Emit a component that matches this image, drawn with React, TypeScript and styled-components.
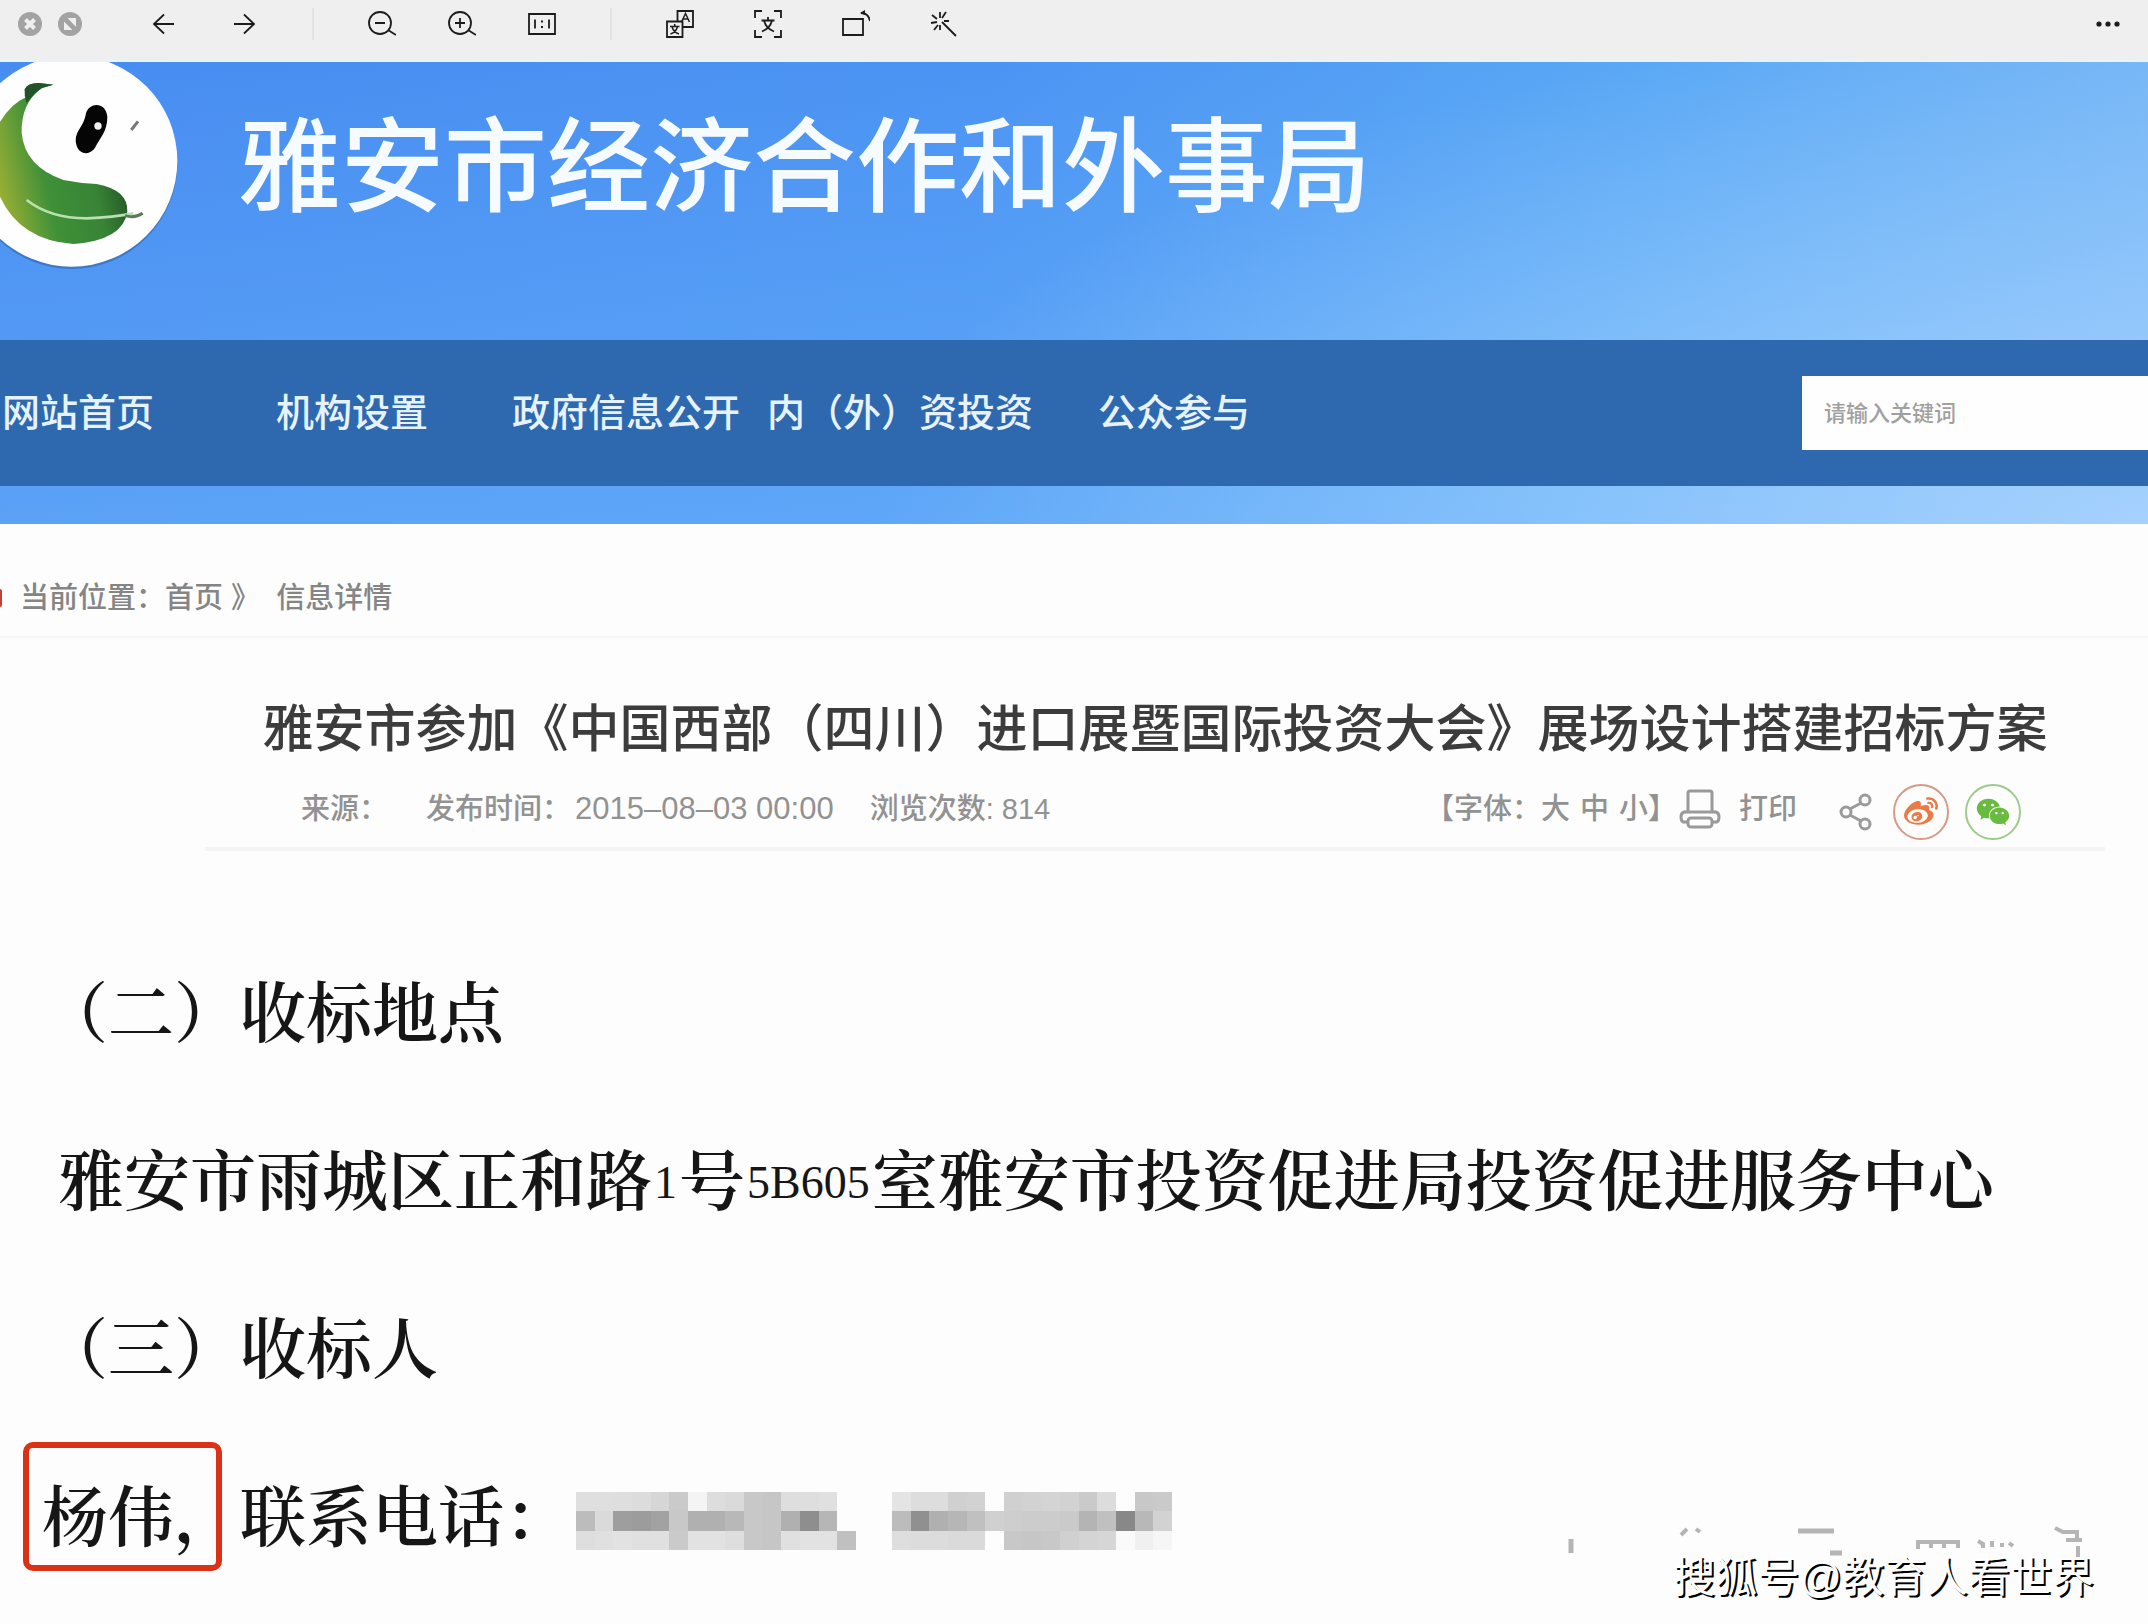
import React from "react";
import styled, { createGlobalStyle } from "styled-components";
import { FaWeibo, FaWeixin } from "react-icons/fa";

const sans = `"Liberation Sans", "Noto Sans CJK SC", sans-serif`;
const serif = `"Liberation Serif", "Noto Serif CJK SC", "Noto Sans CJK SC", serif`;

const GlobalStyle = createGlobalStyle`
  *, *::before, *::after { box-sizing: border-box; }
  body { margin: 0; background: #fdfdfd; font-family: ${sans}; overflow-x: hidden; }
  button { font: inherit; color: inherit; background: none; border: 0; padding: 0; cursor: pointer; }
  a { color: inherit; text-decoration: none; }
  h1, h2, p, ul { margin: 0; padding: 0; }
  svg { display: block; flex: none; }
`;

const Viewer = styled.div`
  display: flex;
  flex-direction: column;
  min-height: 100vh;
  overflow: hidden;
`;

/* ---------- viewer toolbar ---------- */

const Toolbar = styled.div`
  display: flex;
  align-items: center;
  height: 62px;
  padding: 0 0 12px 10px;
  background: #efefef;
  color: #1c1c1c;
  border-bottom: 2px solid #e9f3fa;
`;

const ToolGroup = styled.div<{ $before?: number }>`
  display: flex;
  margin-left: ${(p) => p.$before ?? 0}px;
`;

const ToolButton = styled.button<{ $width: number }>`
  display: flex;
  align-items: center;
  justify-content: center;
  width: ${(p) => p.$width}px;
  height: 48px;
`;

const Divider = styled.span`
  width: 2px;
  height: 32px;
  margin-left: 28px;
  background: #e2e2e2;
`;

const Spacer = styled.span`
  flex: 1;
`;

const Line = ({ children, size = 28 }: { children: React.ReactNode; size?: number }) => (
  <svg width={size} height={size} viewBox="0 0 28 28" fill="none" stroke="currentColor" strokeWidth="1.8">
    {children}
  </svg>
);

const CloseIcon = () => (
  <svg width="24" height="24" viewBox="0 0 24 24">
    <circle cx="12" cy="12" r="12" fill="#a3a3a3" />
    <path d="M7.5 7.5l9 9M16.5 7.5l-9 9" stroke="#efefef" strokeWidth="4" />
  </svg>
);

const ExpandIcon = () => (
  <svg width="24" height="24" viewBox="0 0 24 24">
    <circle cx="12" cy="12" r="12" fill="#a3a3a3" />
    <path d="M9.5 6H18v9zM6 9.500V18h8.500z" fill="#efefef" />
  </svg>
);

const BackIcon = () => (
  <Line><path d="M24 14H4M14 4.500L4 14l10 9.500" /></Line>
);

const ForwardIcon = () => (
  <Line><path d="M4 14h20M14 4.500L24 14l-10 9.500" /></Line>
);

const ZoomIcon = ({ plus }: { plus?: boolean }) => (
  <Line>
    <circle cx="12" cy="13" r="11" />
    <path d="M7 13h10M20 20l8 5" />
    {plus && <path d="M12 8v10" />}
  </Line>
);

const ActualSizeIcon = () => (
  <Line>
    <path d="M1 4h26v20H1zM7 9.500v9M21 9.500v9" />
    <path d="M14 10.500v2M14 16v2" strokeWidth="2" />
  </Line>
);

const TranslateIcon = () => (
  <Line>
    <path d="M11.500 11V1H27v16H17" />
    <path d="M1 11.500h15.500V27H1z" />
    <path d="M15.500 12l4-8.500 4 8.500M17 9h5" strokeWidth="1.500" />
    <path d="M8.700 14v2.500M4 16.500h9.500M6 16.500c1 4 4 6.500 7 7.500M11.500 16.500c-1 4-4 6.500-7 7.500" strokeWidth="1.500" />
  </Line>
);

const ScanTextIcon = () => (
  <Line>
    <path d="M1 8V1h7M20 1h7v7M27 20v7h-7M8 27H1v-7" />
    <path d="M14 7v3.500M7.500 10.500h13M10 10.500c1.500 6 5 9 10 11M18 10.500c-1.500 6-5 9-10 11" />
  </Line>
);

const RotateIcon = () => (
  <Line>
    <path d="M1 9h20v16H1z" />
    <path d="M19 3c5 0 8 3 9 8" />
    <path d="M18 3l5-3v5z" fill="currentColor" stroke="none" />
  </Line>
);

const WandIcon = () => (
  <Line>
    <path d="M12 12l14 14M10 2v6M2 5l5 4M1 13l6-1M4 20l4-5M10 20v-5M12 8l4-6M14 11h5" />
  </Line>
);

const MoreIcon = () => (
  <svg width="24" height="6" viewBox="0 0 24 6" fill="currentColor">
    <circle cx="3" cy="3" r="2.600" />
    <circle cx="12" cy="3" r="2.600" />
    <circle cx="21" cy="3" r="2.600" />
  </svg>
);

/* ---------- site banner ---------- */

const Banner = styled.header`
  padding-bottom: 38px;
  background:
    radial-gradient(ellipse 60% 110% at 100% 100%, rgba(180, 216, 255, 0.75) 0%, rgba(180, 216, 255, 0) 100%),
    linear-gradient(180deg, rgba(120, 195, 255, 0) 0%, rgba(120, 195, 255, 0.4) 100%),
    linear-gradient(98deg, #478cf1 0%, #4c94f3 45%, #5aa8f5 75%, #76b6f6 100%);
`;

const Brand = styled.div`
  display: flex;
  align-items: flex-start;
  height: 278px;
  gap: 58px;
`;

const BrandName = styled.h1`
  padding-top: 29px;
  font-size: 103px;
  line-height: 156px;
  font-weight: 500;
  color: #f6fbff;
  white-space: nowrap;
`;

const Logo = () => (
  <svg width="180" height="208" viewBox="0 36 540 624" role="img" aria-label="熊猫标志">
    <defs>
      <linearGradient id="leaf" x1="0" y1="0.700" x2="1" y2="0.400">
        <stop offset="0" stopColor="#9aaf35" />
        <stop offset="0.350" stopColor="#3f9038" />
        <stop offset="0.700" stopColor="#378436" />
        <stop offset="1" stopColor="#1f4a22" />
      </linearGradient>
    </defs>
    <circle cx="215" cy="340" r="317" fill="#2f66ad" opacity="0.600" />
    <circle cx="215" cy="333" r="317" fill="#fefefe" />
    <path
      d="M74 118Q84 98 118 99L160 104L126 114Q62 160 65 250Q75 350 190 390Q240 400 290 402Q385 420 382 485Q370 570 220 582Q60 570 0 440V215Q35 160 78 142Z"
      fill="url(#leaf)"
    />
    <path d="M74 118Q84 98 118 99L160 104L126 114Q100 130 80 160Q72 140 74 118Z" fill="#24522b" />
    <path d="M80 450Q150 505 260 505Q340 502 400 490" fill="none" stroke="#b9e0b0" strokeWidth="8" />
    <path d="M375 497Q405 506 428 490" fill="none" stroke="#5a7a58" strokeWidth="9" />
    <path d="M258 190C268 155 318 155 322 200C322 245 300 262 286 292C270 320 230 315 227 272C227 240 252 230 258 190Z" fill="#050505" />
    <circle cx="294" cy="228" r="11" fill="#f2f2f2" />
    <path d="M394 240L414 214" stroke="#777" strokeWidth="9" />
  </svg>
);

const NavBar = styled.nav`
  display: flex;
  align-items: center;
  height: 146px;
  background: #2e69b0;
`;

const NavList = styled.ul`
  display: flex;
  flex: none;
  margin-left: -59px;
  list-style: none;
`;

const NavItem = styled.li`
  width: 274px;
  text-align: center;
  font-size: 38px;
  font-weight: 500;
  line-height: 56px;
  color: #e6f3ff;
  white-space: nowrap;
`;

const SearchForm = styled.form`
  flex: 0 1 346px;
  margin-left: auto;
`;

const SearchInput = styled.input`
  display: block;
  width: 100%;
  height: 74px;
  padding: 2px 22px 0;
  border: 0;
  border-radius: 0;
  background: #fefefe;
  font-family: ${sans};
  font-size: 22px;
  font-weight: 500;
  color: #555;
  &::placeholder { color: #a0a0a0; opacity: 1; }
`;

/* ---------- breadcrumb ---------- */

const Breadcrumb = styled.div`
  display: flex;
  align-items: center;
  padding: 52px 0 16px;
  border-bottom: 2px solid #f6f6f6;
  font-size: 29px;
  font-weight: 500;
  line-height: 44px;
  color: #858585;
  white-space: pre;
`;

const Pin = styled.span`
  width: 2px;
  height: 18px;
  margin-right: 18px;
  border-radius: 0 2px 2px 0;
  background: #c8402f;
`;

/* ---------- article ---------- */

const Article = styled.article`
  margin: 54px 43px 0 205px;
  border-bottom: 4px solid #f4f4f4;
`;

const ArticleTitle = styled.h2`
  display: flex;
  justify-content: center;
  font-size: 51px;
  line-height: 76px;
  font-weight: 500;
  color: #3c3c3c;
  white-space: nowrap;
`;

const Meta = styled.div`
  display: flex;
  align-items: center;
  height: 56px;
  margin: 16px 84px 7px 96px;
  font-size: 29px;
  font-weight: 500;
  line-height: 44px;
  color: #929292;
  white-space: nowrap;
`;

const MetaInfo = styled.div`
  display: flex;
  align-items: center;
  padding-bottom: 6px;
`;

const MetaItem = styled.span<{ $gap: number }>`
  margin-right: ${(p) => p.$gap}px;
`;

const Digits = styled.span`
  margin-left: 4px;
  font-size: 31px;
`;

const MetaTools = styled.div`
  display: flex;
  align-items: center;
  margin-left: auto;
`;

const FontSizes = styled.div`
  display: flex;
  padding-bottom: 6px;
`;

const SizeButtons = styled.span`
  display: inline-flex;
  gap: 10px;
`;

const PrintButton = styled.button`
  display: flex;
  align-items: center;
  gap: 18px;
  margin: 0 42px 0 2px;
  padding-bottom: 6px;
`;

const ShareLinks = styled.div`
  display: flex;
  align-items: center;
  gap: 16px;
`;

const ShareCircle = styled.a<{ $ring: string; $ink: string }>`
  display: flex;
  align-items: center;
  justify-content: center;
  width: 56px;
  height: 56px;
  border: 2px solid ${(p) => p.$ring};
  border-radius: 50%;
  color: ${(p) => p.$ink};
  font-size: 34px;
`;

const PrinterIcon = () => (
  <svg width="42" height="40" viewBox="0 0 42 40" fill="none" stroke="#9a9a9a" strokeWidth="3">
    <path d="M9 23V4q0-2 2-2h20q2 0 2 2v19" />
    <path d="M9 33H4q-2-1-2-5t3-5h32q3 1 3 5t-2 5h-5" />
    <rect x="9" y="29" width="24" height="9" rx="3" />
  </svg>
);

const ShareIcon = () => (
  <svg width="38" height="38" viewBox="0 0 38 38" fill="none" stroke="#9a9a9a" strokeWidth="3">
    <circle cx="7" cy="19" r="5" />
    <circle cx="26" cy="7" r="5" />
    <circle cx="26" cy="31" r="5" />
    <path d="M11 16l11-6M11 22l11 6" />
  </svg>
);

/* ---------- document text ---------- */

const Document = styled.main`
  position: relative;
  flex: 1;
  padding: 80px 0 20px 42px;
  font-family: ${serif};
  font-size: 66px;
  font-weight: 600;
  line-height: 168px;
  color: #161616;
`;

const Paragraph = styled.p<{ $indent?: boolean }>`
  display: flex;
  align-items: center;
  height: 168px;
  padding-left: ${(p) => (p.$indent ? 16 : 0)}px;
  white-space: nowrap;
`;

const Latin = styled.span`
  margin: 0 2px;
  font-size: 46px;
  font-weight: 400;
`;

const Marked = styled.span`
  position: relative;
  &::after {
    content: "";
    position: absolute;
    inset: 7px 18px 32px -19px;
    border: 6px solid #db3116;
    border-radius: 10px;
  }
`;

const Redacted = styled.span<{ $gap: number }>`
  margin-left: ${(p) => p.$gap}px;
  padding-top: 4px;
`;

const phoneA = [
  "dfdfdf dfdfdf dedede dcdcdc d6d6d6 cacaca f4f4f4 dddddd dadada c8c8c8 c6c6c6 dedede dedede e0e0e0 -",
  "bcbcbc dadada 9e9e9e 9c9c9c a2a2a2 c8c8c8 b0b0b0 b0b0b0 b8b8b8 c8c8c8 c6c6c6 b0b0b0 8e8e8e b6b6b6 -",
  "dedede e0e0e0 e2e2e2 e0e0e0 e0e0e0 cacaca e2e2e2 e2e2e2 dedede c8c8c8 c6c6c6 e0e0e0 e2e2e2 e2e2e2 c0c0c0",
];

const phoneB = [
  "e4e4e4 dddddd dddddd d0d0d0 d2d2d2 - d0d0d0 d2d2d2 d4d4d4 d2d2d2 cacaca dcdcdc - c8c8c8 cacaca",
  "bcbcbc 909090 b0b0b0 b6b6b6 c0c0c0 d0d0d0 cecece cccccc cccccc cacaca b4b4b4 c0c0c0 888888 b8b8b8 d2d2d2",
  "dedede dcdcdc dcdcdc dadada dadada - c8c8c8 c6c6c6 c8c8c8 d0d0d0 d4d4d4 d6d6d6 fafafa f0f0f0 f6f6f6",
];

const Mosaic = ({ rows }: { rows: string[] }) => (
  <svg width="280" height="58" viewBox="0 0 15 3" preserveAspectRatio="none" shapeRendering="crispEdges" aria-hidden="true">
    {rows.map((row, y) =>
      row.split(" ").map((c, x) =>
        c === "-" ? null : <rect key={`${x}-${y}`} x={x} y={y} width="1" height="1" fill={`#${c}`} />
      )
    )}
  </svg>
);

/* ---------- watermark ---------- */

const Watermark = styled.div`
  position: absolute;
  right: 54px;
  bottom: 15px;
  font-family: ${sans};
  font-size: 42px;
  font-weight: 400;
  line-height: 62px;
  color: #fff;
  text-shadow: 2px 2px 0 #000;
  white-space: nowrap;
`;

const Fragments = styled.div`
  position: absolute;
  right: 48px;
  bottom: 44px;
`;

const FadedStrokes = () => (
  <svg width="540" height="60" viewBox="1560 1520 540 60" fill="none" stroke="#b5b5b5" strokeWidth="5" aria-hidden="true">
    <path d="M1571 1539v14" />
    <path d="M1681 1535l6-6M1696 1529l4 3" strokeWidth="4" />
    <path d="M1798 1531h36M1830 1553h12" />
    <path d="M1918 1549v-7h40v6M1931 1542v6M1944 1542v6" strokeWidth="4" />
    <path d="M1978 1541l5 3v4M1992 1541v6M2002 1543v4M2009 1543l4 3" strokeWidth="4" />
    <path d="M2055 1528l8 4h14v8M2066 1540h16M2078 1546v12" strokeWidth="4" />
  </svg>
);

const navItems = ["网站首页", "机构设置", "政府信息公开", "内（外）资投资", "公众参与"];

export default function App() {
  return (
    <Viewer>
      <GlobalStyle />
      <Toolbar role="toolbar">
        <ToolGroup>
          <ToolButton $width={40} aria-label="关闭"><CloseIcon /></ToolButton>
          <ToolButton $width={40} aria-label="全屏"><ExpandIcon /></ToolButton>
        </ToolGroup>
        <ToolGroup $before={34}>
          <ToolButton $width={80} aria-label="上一张"><BackIcon /></ToolButton>
          <ToolButton $width={80} aria-label="下一张"><ForwardIcon /></ToolButton>
        </ToolGroup>
        <Divider />
        <ToolGroup $before={28}>
          <ToolButton $width={80} aria-label="缩小"><ZoomIcon /></ToolButton>
          <ToolButton $width={80} aria-label="放大"><ZoomIcon plus /></ToolButton>
          <ToolButton $width={80} aria-label="原始大小"><ActualSizeIcon /></ToolButton>
        </ToolGroup>
        <Divider />
        <ToolGroup $before={24}>
          <ToolButton $width={88} aria-label="翻译"><TranslateIcon /></ToolButton>
          <ToolButton $width={88} aria-label="提取文字"><ScanTextIcon /></ToolButton>
          <ToolButton $width={88} aria-label="旋转"><RotateIcon /></ToolButton>
          <ToolButton $width={88} aria-label="编辑"><WandIcon /></ToolButton>
        </ToolGroup>
        <Spacer />
        <ToolButton $width={80} aria-label="更多"><MoreIcon /></ToolButton>
      </Toolbar>

      <Banner>
        <Brand>
          <Logo />
          <BrandName>雅安市经济合作和外事局</BrandName>
        </Brand>
        <NavBar>
          <NavList>
            {navItems.map((item) => (
              <NavItem key={item}><a href="#">{item}</a></NavItem>
            ))}
          </NavList>
          <SearchForm>
            <SearchInput type="text" aria-label="请输入关键词" placeholder="请输入关键词" />
          </SearchForm>
        </NavBar>
      </Banner>

      <Breadcrumb>
        <Pin />
        当前位置：<a href="#">首页</a>{" 》  信息详情"}
      </Breadcrumb>

      <Article>
        <ArticleTitle>雅安市参加《中国西部（四川）进口展暨国际投资大会》展场设计搭建招标方案</ArticleTitle>
        <Meta>
          <MetaInfo>
            <MetaItem $gap={38}>来源：</MetaItem>
            <MetaItem $gap={36}>发布时间：<Digits>2015–08–03 00:00</Digits></MetaItem>
            <MetaItem $gap={0}>浏览次数: 814</MetaItem>
          </MetaInfo>
          <MetaTools>
            <FontSizes>
              <span>【字体：</span>
              <SizeButtons>
                <button>大</button>
                <button>中</button>
                <button>小</button>
              </SizeButtons>
              <span>】</span>
            </FontSizes>
            <PrintButton><PrinterIcon />打印</PrintButton>
            <ShareLinks>
              <ShareIcon />
              <ShareCircle href="#" aria-label="微博" $ring="#d79a86" $ink="#ea7b45"><FaWeibo /></ShareCircle>
              <ShareCircle href="#" aria-label="微信" $ring="#9ccb8c" $ink="#69bb40"><FaWeixin /></ShareCircle>
            </ShareLinks>
          </MetaTools>
        </Meta>
      </Article>

      <Document>
        <Paragraph>（二）收标地点</Paragraph>
        <Paragraph $indent>
          雅安市雨城区正和路<Latin>1</Latin>号<Latin>5B605</Latin>室雅安市投资促进局投资促进服务中心
        </Paragraph>
        <Paragraph>（三）收标人</Paragraph>
        <Paragraph>
          <Marked>杨伟，</Marked>联系电话：
          <Redacted $gap={6}><Mosaic rows={phoneA} /></Redacted>
          <Redacted $gap={36}><Mosaic rows={phoneB} /></Redacted>
        </Paragraph>
        <Fragments><FadedStrokes /></Fragments>
        <Watermark>搜狐号@教育人看世界</Watermark>
      </Document>
    </Viewer>
  );
}
